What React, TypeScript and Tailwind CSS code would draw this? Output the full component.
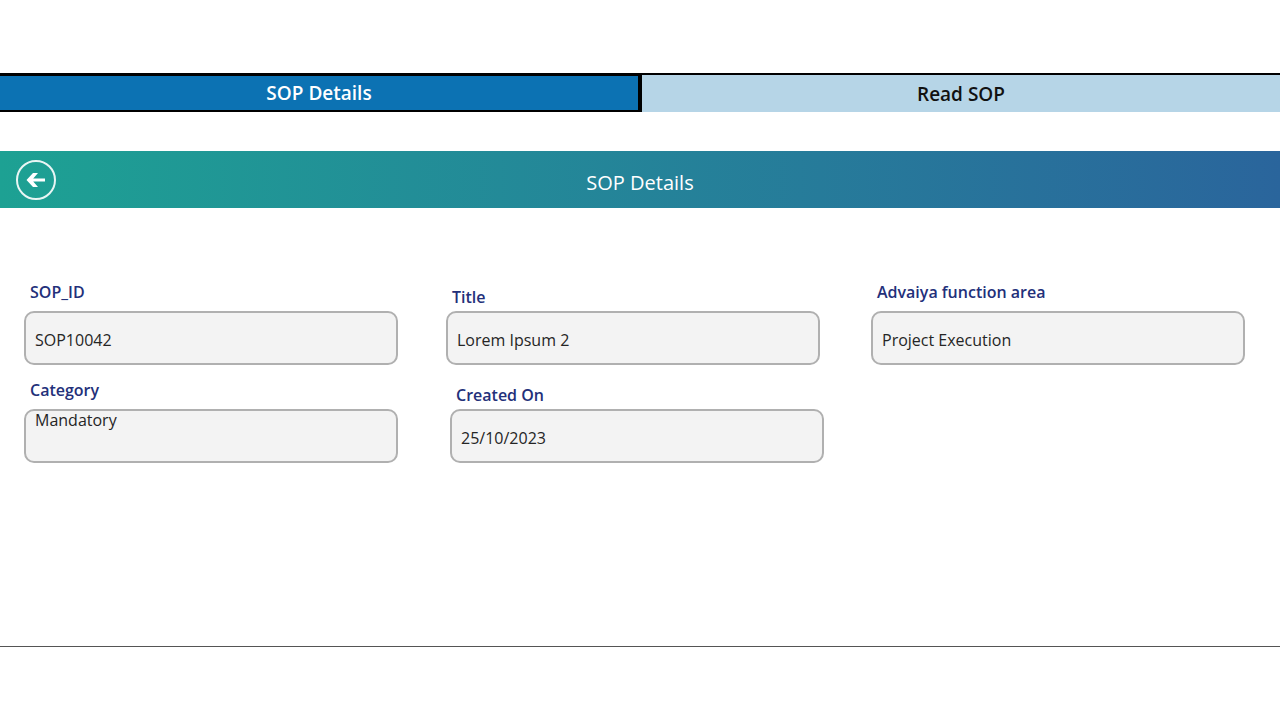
import React, { useState } from "react";

interface FieldProps {
  id: string;
  label: string;
  value: string;
  className?: string;
  labelClassName?: string;
  multiline?: boolean;
}

const boxStyles =
  "block w-full h-[54px] px-[9px] rounded-[10px] border-2 border-[#b0b0b0] bg-[#f3f3f3] text-base text-[#252525] outline-none";

const Field = ({
  id,
  label,
  value,
  className = "",
  labelClassName = "pb-[7px]",
  multiline = false,
}: FieldProps) => (
  <div className={`flex-1 min-w-0 flex flex-col justify-end ${className}`}>
    <label
      htmlFor={id}
      className={`pl-1.5 text-base leading-6 font-semibold text-[#23307a] ${labelClassName}`}
    >
      {label}
    </label>
    {multiline ? (
      <textarea
        id={id}
        readOnly
        defaultValue={value}
        className={`${boxStyles} resize-none leading-[18px]`}
      />
    ) : (
      <input
        id={id}
        type="text"
        readOnly
        defaultValue={value}
        className={`${boxStyles} pt-[3px]`}
      />
    )}
  </div>
);

const tabs = ["SOP Details", "Read SOP"];

const App = () => {
  const [activeTab, setActiveTab] = useState("SOP Details");

  return (
    <div className="min-h-screen flex flex-col bg-white py-[73px] font-['Open_Sans',sans-serif]">
      <nav className="flex border-t-2 border-black">
        {tabs.map((tab) => (
          <button
            key={tab}
            type="button"
            onClick={() => setActiveTab(tab)}
            className={`flex-1 h-[37px] text-[19px] leading-6 font-semibold ${
              activeTab === tab
                ? "border-t border-b-2 border-r-4 border-black bg-[#0c72b3] text-white"
                : "bg-[#b6d5e7] text-[#111111]"
            }`}
          >
            {tab}
          </button>
        ))}
      </nav>

      <header className="mt-[39px] h-[57px] grid grid-cols-[1fr_auto_1fr] items-center px-4 bg-linear-to-r from-[#1da193] to-[#2a659c]">
        <button
          type="button"
          aria-label="Back"
          className="w-10 h-10 rounded-full border-2 border-white/90 flex items-center justify-center text-white"
        >
          <svg viewBox="0 0 20 16" className="w-5 h-4" fill="currentColor">
            <path d="M0.5 8 L7 1 H12 L7.2 6.4 H19 V9.5 H7.2 L12 15 H7 Z" />
          </svg>
        </button>
        <h1 className="pt-[7px] text-xl leading-7 font-medium text-white">
          SOP Details
        </h1>
      </header>

      <main className="flex-1 pt-[72px] pl-6 pr-[35px] border-b border-[#555555]">
        <div className="flex">
          <Field
            id="sop-id"
            label="SOP_ID"
            value="SOP10042"
            className="mr-12"
          />
          <Field
            id="title"
            label="Title"
            value="Lorem Ipsum 2"
            className="mr-[51px]"
            labelClassName="pb-0.5"
          />
          <Field
            id="function-area"
            label="Advaiya function area"
            value="Project Execution"
          />
        </div>

        <div className="flex mt-[13px]">
          <Field
            id="category"
            label="Category"
            value="Mandatory"
            className="mr-[52px]"
            multiline
          />
          <Field
            id="created-on"
            label="Created On"
            value="25/10/2023"
            className="mr-[47px]"
            labelClassName="pb-0.5"
          />
          <div className="flex-1" />
        </div>
      </main>
    </div>
  );
};

export default App;
